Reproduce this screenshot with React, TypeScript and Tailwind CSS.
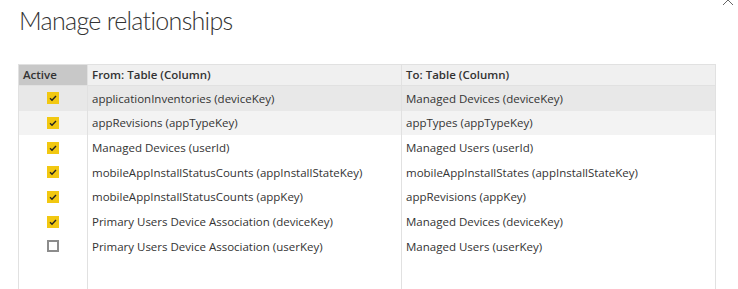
import React from "react";

const rows = [
  { active: true, from: "applicationInventories (deviceKey)", to: "Managed Devices (deviceKey)", bg: "bg-[#e8e8e8]" },
  { active: true, from: "appRevisions (appTypeKey)", to: "appTypes (appTypeKey)", bg: "bg-[#f3f3f3]" },
  { active: true, from: "Managed Devices (userId)", to: "Managed Users (userId)", bg: "bg-white" },
  { active: true, from: "mobileAppInstallStatusCounts (appInstallStateKey)", to: "mobileAppInstallStates (appInstallStateKey)", bg: "bg-white" },
  { active: true, from: "mobileAppInstallStatusCounts (appKey)", to: "appRevisions (appKey)", bg: "bg-white" },
  { active: true, from: "Primary Users Device Association (deviceKey)", to: "Managed Devices (deviceKey)", bg: "bg-white" },
  { active: false, from: "Primary Users Device Association (userKey)", to: "Managed Users (userKey)", bg: "bg-white" },
];

function Check({ on }: { on: boolean }) {
  if (!on) {
    return <div className="w-[12px] h-[12px] border-2 border-[#8c8c8c] bg-white" />;
  }
  return (
    <div className="w-[12px] h-[12px] bg-[#f2c811] flex items-center justify-center">
      <svg width="10" height="10" viewBox="0 0 10 10">
        <path d="M2 5.2 L4 7.2 L8 3" fill="none" stroke="#222" strokeWidth="1.4" />
      </svg>
    </div>
  );
}

export default function App() {
  return (
    <div
      className="w-[738px] h-[289px] bg-white overflow-hidden relative text-[#333]"
      style={{ fontFamily: "'Segoe UI', 'Open Sans', 'Noto Sans', sans-serif" }}
    >
      <div className="absolute left-[722px] top-[-6px]">
        <svg width="12" height="12" viewBox="0 0 12 12">
          <path d="M1 1 L11 11 M11 1 L1 11" stroke="#666" strokeWidth="1" fill="none" />
        </svg>
      </div>
      <div className="pl-[19px] pt-[3px] h-[64px]">
        <h1
          className="text-[25px] leading-[34px] font-light text-[#333] tracking-[-0.7px]"
          style={{ fontFamily: "'Segoe UI Light', Lato, 'Open Sans', sans-serif" }}
        >
          Manage relationships
        </h1>
      </div>
      <div className="ml-[18px] w-[698px] border border-[#e1e1e1] h-[240px] flex flex-col text-[11.5px]">
        <div className="flex h-[21px] border-b border-[#e1e1e1] font-semibold">
          <div className="w-[69px] bg-[#c8c8c8] pl-[4px] flex items-center border-r border-[#e1e1e1]">Active</div>
          <div className="w-[314px] bg-[#f0f0f0] pl-[4px] flex items-center border-r border-[#e1e1e1]">From: Table (Column)</div>
          <div className="flex-1 bg-[#f0f0f0] pl-[4px] flex items-center">To: Table (Column)</div>
        </div>
        <div className="flex-1 flex flex-col relative">
          {rows.map((r, i) => (
            <div key={i} className={`flex h-[24.67px] ${r.bg}`}>
              <div className="w-[69px] flex items-center justify-center border-r border-[#e1e1e1]">
                <Check on={r.active} />
              </div>
              <div className="w-[314px] pl-[4px] flex items-center border-r border-[#e1e1e1] whitespace-nowrap">{r.from}</div>
              <div className="flex-1 pl-[4px] flex items-center whitespace-nowrap">{r.to}</div>
            </div>
          ))}
          <div className="flex flex-1">
            <div className="w-[69px] border-r border-[#e1e1e1]" />
            <div className="w-[314px] border-r border-[#e1e1e1]" />
            <div className="flex-1" />
          </div>
        </div>
      </div>
    </div>
  );
}
